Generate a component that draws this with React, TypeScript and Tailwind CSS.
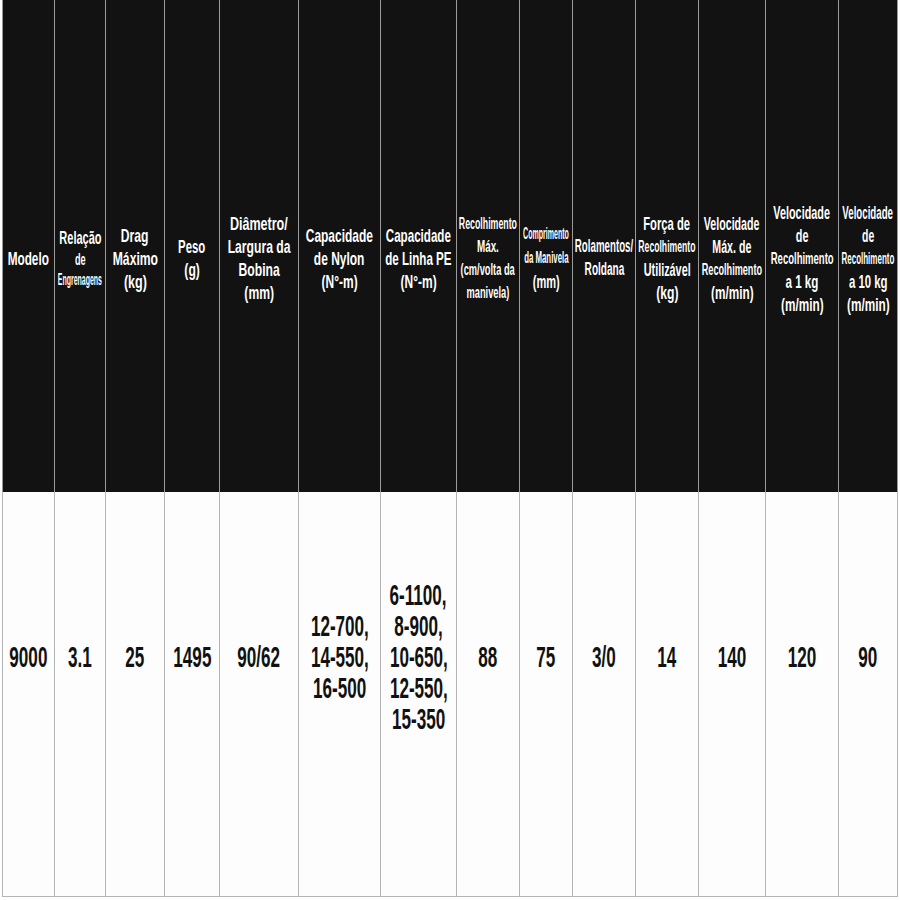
type Ln = [string, string];

const hd = "text-[19px] leading-[23px]";
const sm = "text-[16px] leading-[23px]";

const cols: { head: Ln[]; body: string[] }[] = [
  { head: [["Modelo", `${hd} scale-x-[0.62]`]], body: ["9000"] },
  {
    head: [
      ["Relação", "text-[19px] leading-[24px] scale-x-[0.58]"],
      ["de", "text-[16px] leading-[20px] scale-x-[0.57]"],
      ["Engrenagens", "text-[17px] leading-[20px] scale-x-[0.41]"],
    ],
    body: ["3.1"],
  },
  {
    head: [
      ["Drag", `${hd} scale-x-[0.64]`],
      ["Máximo", `${hd} scale-x-[0.64]`],
      ["(kg)", `${hd} scale-x-[0.66]`],
    ],
    body: ["25"],
  },
  {
    head: [
      ["Peso", `${hd} scale-x-[0.6]`],
      ["(g)", `${hd} scale-x-[0.64]`],
    ],
    body: ["1495"],
  },
  {
    head: [
      ["Diâmetro/", `${hd} scale-x-[0.66]`],
      ["Largura da", `${hd} scale-x-[0.64]`],
      ["Bobina", `${hd} scale-x-[0.64]`],
      ["(mm)", `${hd} scale-x-[0.64]`],
    ],
    body: ["90/62"],
  },
  {
    head: [
      ["Capacidade", `${hd} scale-x-[0.63]`],
      ["de Nylon", `${hd} scale-x-[0.63]`],
      ["(N°-m)", `${hd} scale-x-[0.63]`],
    ],
    body: ["12-700,", "14-550,", "16-500"],
  },
  {
    head: [
      ["Capacidade", `${hd} scale-x-[0.61]`],
      ["de Linha PE", `${hd} scale-x-[0.61]`],
      ["(N°-m)", `${hd} scale-x-[0.63]`],
    ],
    body: ["6-1100,", "8-900,", "10-650,", "12-550,", "15-350"],
  },
  {
    head: [
      ["Recolhimento", `${sm} scale-x-[0.55]`],
      ["Máx.", "text-[17px] leading-[23px] scale-x-[0.58]"],
      ["(cm/volta da", `${sm} scale-x-[0.58]`],
      ["manivela)", `${sm} scale-x-[0.58]`],
    ],
    body: ["88"],
  },
  {
    head: [
      ["Comprimento", "text-[16px] leading-[24px] scale-x-[0.44]"],
      ["da Manivela", "text-[16px] leading-[24px] scale-x-[0.49]"],
      ["(mm)", "text-[19px] leading-[24px] scale-x-[0.58]"],
    ],
    body: ["75"],
  },
  {
    head: [
      ["Rolamentos/", "text-[18px] leading-[23px] scale-x-[0.54]"],
      ["Roldana", "text-[18px] leading-[23px] scale-x-[0.56]"],
    ],
    body: ["3/0"],
  },
  {
    head: [
      ["Força de", `${hd} scale-x-[0.59]`],
      ["Recolhimento", `${sm} scale-x-[0.54]`],
      ["Utilizável", `${hd} scale-x-[0.57]`],
      ["(kg)", `${hd} scale-x-[0.64]`],
    ],
    body: ["14"],
  },
  {
    head: [
      ["Velocidade", `${hd} scale-x-[0.56]`],
      ["Máx. de", `${hd} scale-x-[0.56]`],
      ["Recolhimento", `${sm} scale-x-[0.57]`],
      ["(m/min)", `${hd} scale-x-[0.62]`],
    ],
    body: ["140"],
  },
  {
    head: [
      ["Velocidade", `${hd} scale-x-[0.57]`],
      ["de", `${hd} scale-x-[0.57]`],
      ["Recolhimento", "text-[17px] leading-[23px] scale-x-[0.56]"],
      ["a 1 kg", `${hd} scale-x-[0.61]`],
      ["(m/min)", `${hd} scale-x-[0.62]`],
    ],
    body: ["120"],
  },
  {
    head: [
      ["Velocidade", `${hd} scale-x-[0.51]`],
      ["de", `${hd} scale-x-[0.55]`],
      ["Recolhimento", `${sm} scale-x-[0.5]`],
      ["a 10 kg", `${hd} scale-x-[0.6]`],
      ["(m/min)", `${hd} scale-x-[0.62]`],
    ],
    body: ["90"],
  },
];

function Line({ text, cls }: { text: string; cls: string }) {
  const [size, lead, scale] = cls.split(" ");
  return (
    <div className={`flex justify-center whitespace-nowrap ${size} ${lead}`}>
      <span className={`inline-block ${scale}`}>{text}</span>
    </div>
  );
}

export default function App() {
  return (
    <div className="w-[900px] h-[900px] bg-white px-[2px] font-['Liberation_Sans',Arial,sans-serif] font-bold">
      <div className="grid grid-cols-[52px_51px_59px_55px_79px_82px_76px_63px_53px_63px_63px_67px_73px_60px] grid-rows-[492px_404px] border-b border-[#b4b4b4]">
        {cols.map((c, i) => (
          <div
            key={"h" + i}
            className={`flex flex-col justify-center bg-[#121212] text-white border-l border-[#9a9a9a] pt-[24px] ${i === cols.length - 1 ? "border-r" : ""}`}
          >
            {c.head.map(([t, cl], j) => (
              <Line key={j} text={t} cls={cl} />
            ))}
          </div>
        ))}
        {cols.map((c, i) => (
          <div
            key={"b" + i}
            className={`flex flex-col justify-center bg-[#fdfdfd] text-[#111] border-l border-[#b4b4b4] pb-[76px] ${i === cols.length - 1 ? "border-r" : ""}`}
          >
            {c.body.map((t, j) => (
              <div key={j} className="flex justify-center whitespace-nowrap text-[30px] leading-[31px]">
                <span className="inline-block scale-x-[0.57]">{t}</span>
              </div>
            ))}
          </div>
        ))}
      </div>
    </div>
  );
}
